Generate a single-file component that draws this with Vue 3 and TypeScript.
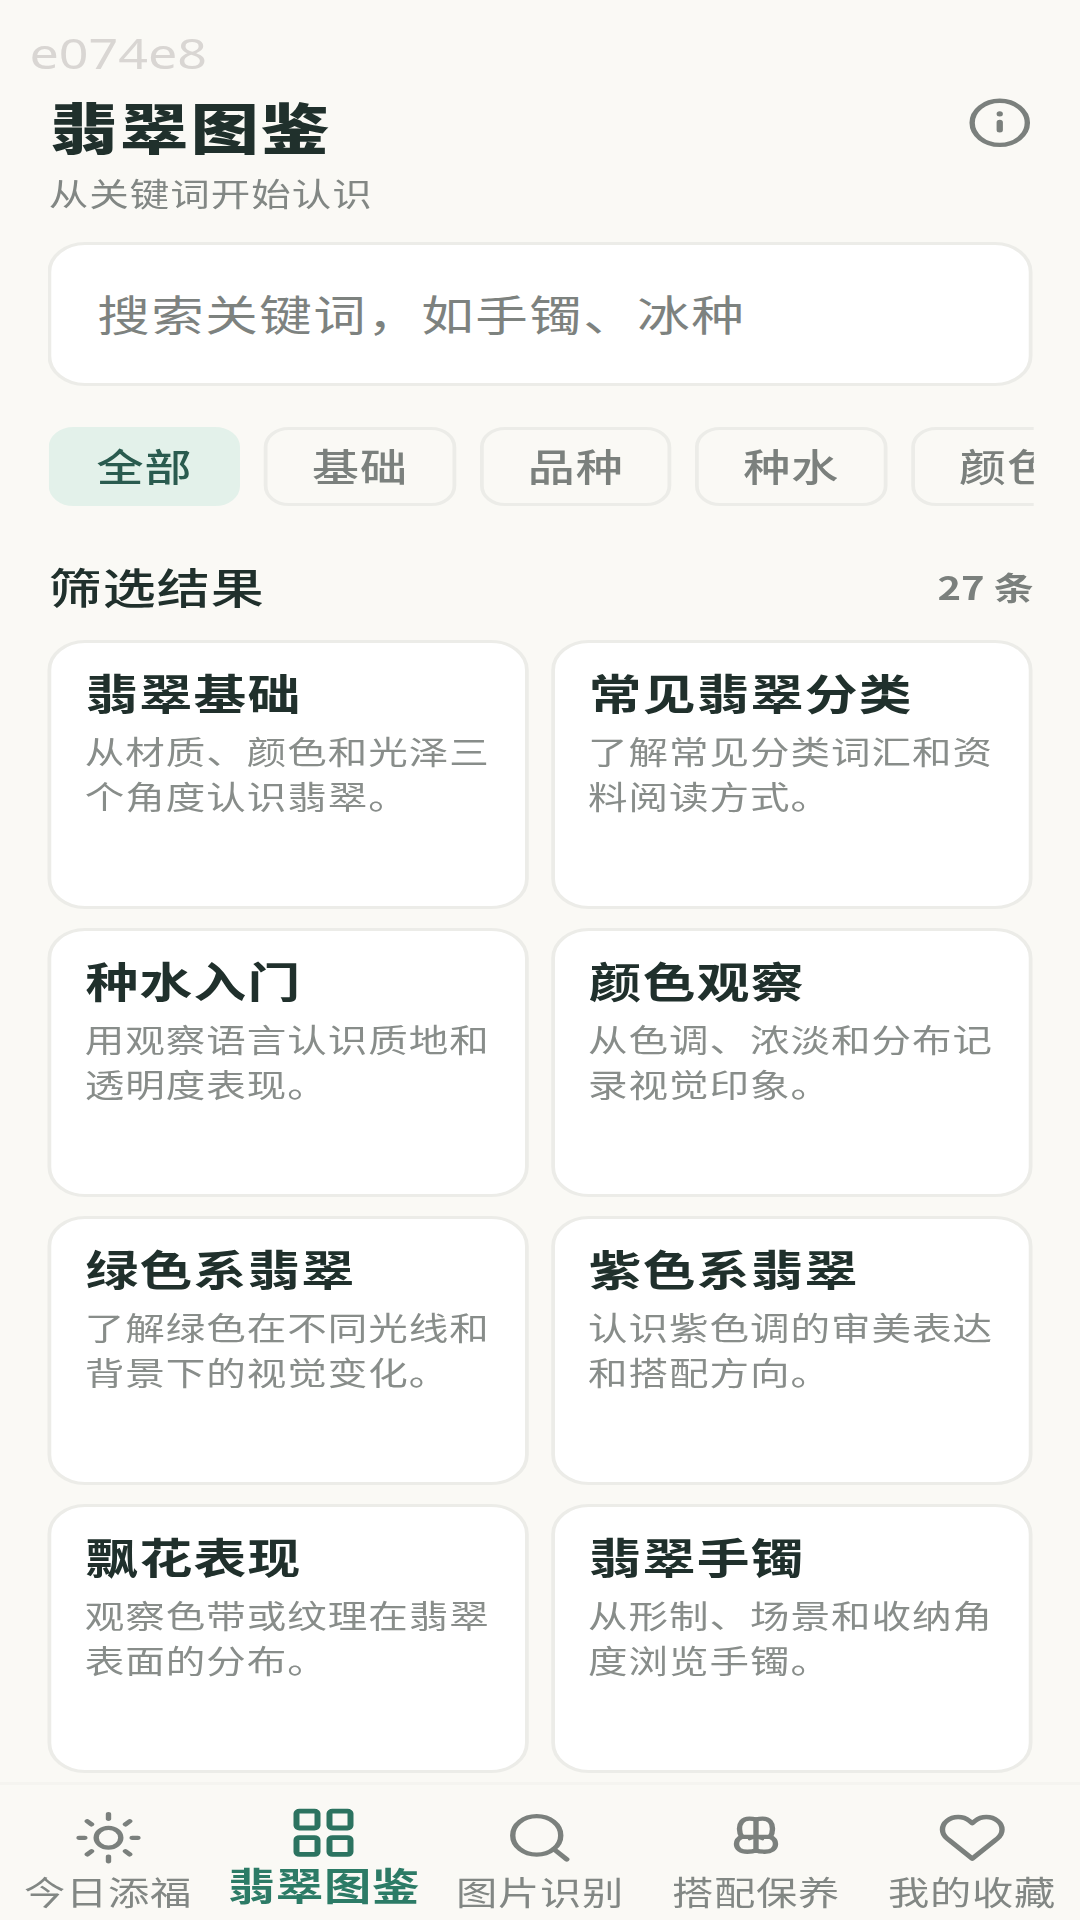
<script setup lang="ts">
interface Card {
  title: string
  desc: string
}
interface Tab {
  label: string
  icon: string
  active?: boolean
}

const chips: string[] = ['全部', '基础', '品种', '种水', '颜色']

const cards: Card[] = [
  { title: '翡翠基础', desc: '从材质、颜色和光泽三个角度认识翡翠。' },
  { title: '常见翡翠分类', desc: '了解常见分类词汇和资料阅读方式。' },
  { title: '种水入门', desc: '用观察语言认识质地和透明度表现。' },
  { title: '颜色观察', desc: '从色调、浓淡和分布记录视觉印象。' },
  { title: '绿色系翡翠', desc: '了解绿色在不同光线和背景下的视觉变化。' },
  { title: '紫色系翡翠', desc: '认识紫色调的审美表达和搭配方向。' },
  { title: '飘花表现', desc: '观察色带或纹理在翡翠表面的分布。' },
  { title: '翡翠手镯', desc: '从形制、场景和收纳角度浏览手镯。' },
]

const tabs: Tab[] = [
  { label: '今日添福', icon: 'sun' },
  { label: '翡翠图鉴', icon: 'grid', active: true },
  { label: '图片识别', icon: 'search' },
  { label: '搭配保养', icon: 'clover' },
  { label: '我的收藏', icon: 'heart' },
]
</script>

<template>
  <div class="viewport">
    <div class="page">
      <div class="build">e074e8</div>
      <header class="header">
        <div>
          <h1 class="title">翡翠图鉴</h1>
          <p class="subtitle">从关键词开始认识</p>
        </div>
        <svg class="icon info" viewBox="0 0 24 24">
          <circle cx="12" cy="12" r="9.2" />
          <path d="M12 11.8v3.2M12 8.2v.1" stroke-width="2.1" />
        </svg>
      </header>

      <div class="search">搜索关键词，如手镯、冰种</div>

      <div class="chips">
        <span v-for="(chip, i) in chips" :key="chip" class="chip" :class="{ on: i === 0 }">{{ chip }}</span>
      </div>

      <div class="section">
        <h2>筛选结果</h2>
        <span class="count">27 条</span>
      </div>

      <main class="grid">
        <article v-for="card in cards" :key="card.title" class="card">
          <h3>{{ card.title }}</h3>
          <p>{{ card.desc }}</p>
        </article>
      </main>

      <nav class="nav">
        <div v-for="tab in tabs" :key="tab.label" class="tab" :class="{ active: tab.active }">
          <svg class="icon" viewBox="0 0 24 24">
            <template v-if="tab.icon === 'sun'">
              <circle cx="12" cy="12" r="4.1" />
              <path d="M12 2.200v1.900M12 19.900v1.900M4.930 5.100l1.410 1.300M17.660 17.600l1.410 1.300M2.200 12h1.900M19.900 12h1.900M6.340 17.600l-1.410 1.300M19.070 5.100l-1.410 1.300" />
            </template>
            <template v-else-if="tab.icon === 'grid'">
              <rect x="3" y="3" width="7" height="7" rx="1" />
              <rect x="14" y="3" width="7" height="7" rx="1" />
              <rect x="14" y="14" width="7" height="7" rx="1" />
              <rect x="3" y="14" width="7" height="7" rx="1" />
            </template>
            <template v-else-if="tab.icon === 'search'">
              <circle cx="11" cy="11" r="8" />
              <path d="M21 21l-4.35-4.35" />
            </template>
            <template v-else-if="tab.icon === 'clover'">
              <path d="M12 4.400v13M7 11.600h10" />
              <path d="M12 4.400C11.200 4.100 10.500 4 9.800 4C7.400 4 6.500 6.100 6.500 8.200c0 1.200.2 2.400.8 3.400-1.200.6-1.800 1.800-1.800 3 0 2 1.400 3.200 3.600 3.200 1.200 0 2.200-.2 2.900-.6" />
              <path d="M12 4.400C12.800 4.100 13.500 4 14.200 4C16.600 4 17.500 6.100 17.500 8.200c0 1.200-.2 2.400-.8 3.400 1.200.6 1.800 1.800 1.800 3 0 2-1.400 3.200-3.600 3.200-1.200 0-2.200-.2-2.900-.6" />
              <path d="M9.800 12.600l2.200-1 2.200 1" stroke-width="1" />
            </template>
            <path
              v-else
              transform="translate(.6 .5) scale(.95)"
              stroke-width="1.900"
              d="M20.84 4.61a5.5 5.5 0 0 0-7.78 0L12 5.67l-1.06-1.06a5.5 5.5 0 0 0-7.78 7.78l1.06 1.06L12 21.23l7.78-7.78 1.06-1.06a5.5 5.5 0 0 0 0-7.78z"
            />
          </svg>
          <span class="label">{{ tab.label }}</span>
        </div>
      </nav>
    </div>
  </div>
</template>

<style>
body {
  background: #faf9f5;
}
</style>

<style scoped>
.viewport {
  width: 1080px;
  height: 1920px;
  overflow: hidden;
  background: #faf9f5;
}
/* The layout is 864 units wide and stretched to fill the window. */
.page {
  width: 864px;
  height: 1920px;
  box-sizing: border-box;
  display: flex;
  flex-direction: column;
  transform: scaleX(1.25);
  transform-origin: 0 0;
  font-family: 'Noto Sans CJK SC', sans-serif;
  color: #20302c;
}
h1,
h2,
h3,
p {
  margin: 0;
}
.icon {
  width: 57.6px;
  height: 57.6px;
  fill: none;
  stroke: #7b807d;
  stroke-width: 1.8;
  stroke-linecap: round;
  stroke-linejoin: round;
}
.build {
  height: 96px;
  flex: none;
  padding-left: 23.5px;
  font: 41.6px/106px 'Noto Sans', sans-serif;
  color: #d9d6d3;
}
.header {
  height: 146px;
  flex: none;
  display: flex;
  justify-content: space-between;
  padding: 0 35.4px 0 40px;
}
.title {
  font-size: 54.4px;
  letter-spacing: 1.9px;
  font-weight: 800;
  line-height: 60px;
}
.subtitle {
  margin: 14px 0 0 -1px;
  font-size: 31.6px;
  letter-spacing: 0.8px;
  line-height: 44px;
  color: #828784;
}
.info {
  margin-top: -2px;
}
.search {
  flex: none;
  height: 144px;
  box-sizing: border-box;
  margin: 0 38.4px;
  padding-left: 36.4px;
  border: 3px solid #ecece8;
  border-radius: 30px;
  background: #fff;
  font-size: 42px;
  letter-spacing: 1.2px;
  line-height: 136px;
  color: #7d827f;
}
.chips {
  flex: none;
  display: flex;
  gap: 18.9px;
  margin: 41px 37.4px 0 38.8px;
  overflow: hidden;
}
.chip {
  flex: none;
  width: 153.6px;
  height: 79px;
  box-sizing: border-box;
  border: 3px solid #ecece8;
  border-radius: 20px;
  text-align: center;
  font-size: 37.6px;
  letter-spacing: 0.8px;
  font-weight: 500;
  line-height: 69px;
  color: #7b807d;
}
.chip.on {
  border-color: #e3f1ea;
  background: #e3f1ea;
  color: #2a5b4f;
}
.section {
  flex: none;
  height: 134px;
  display: flex;
  justify-content: space-between;
  padding: 0 37px 0 39px;
  line-height: 160px;
}
h2 {
  font-size: 42.4px;
  letter-spacing: 0.8px;
  font-weight: 500;
}
.count {
  font-size: 32px;
  font-weight: 700;
  color: #7b807d;
}
.grid {
  flex: none;
  display: grid;
  grid-template-columns: 384.8px 384.8px;
  grid-auto-rows: 268.8px;
  gap: 19.2px 17.8px;
  padding: 0 38.4px;
}
.card {
  box-sizing: border-box;
  border: 3px solid #ecece8;
  border-radius: 30px;
  background: #fff;
  padding: 19px 18px 0 27px;
}
.card h3 {
  font-size: 42.2px;
  letter-spacing: 1px;
  font-weight: 700;
  line-height: 60px;
}
.card p {
  margin: 6px 0 0 -0.6px;
  font-size: 31.6px;
  letter-spacing: 0.8px;
  line-height: 45px;
  color: #888d8a;
}
.nav {
  flex: none;
  display: flex;
  margin-top: 9px;
  height: 139px;
  box-sizing: border-box;
  border-top: 3px solid #f5f4f0;
}
.tab {
  flex: 1;
  display: flex;
  flex-direction: column;
  align-items: center;
  padding-top: 24px;
  font-size: 33px;
  letter-spacing: 0.6px;
  color: #828784;
}
.label {
  line-height: 40px;
  margin-top: 5px;
  white-space: nowrap;
}
.tab.active {
  padding-top: 19px;
  font-size: 37.8px;
  font-weight: 700;
  color: #2c7b66;
}
.tab.active .icon {
  stroke: #2c7360;
  stroke-width: 2;
}
.tab.active .label {
  margin-top: 3px;
}
</style>
